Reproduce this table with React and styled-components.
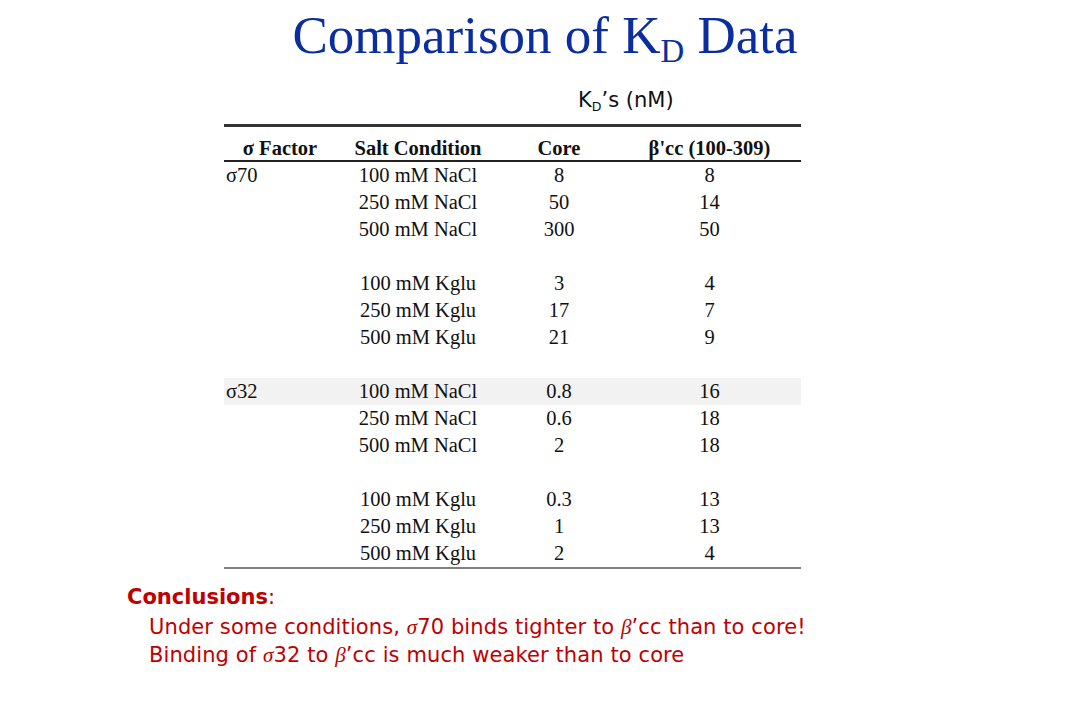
import React from 'react';
import styled, { createGlobalStyle } from 'styled-components';

const Global = createGlobalStyle`
  body {
    margin: 0;
    background: #ffffff;
  }
`;

const Slide = styled.div`
  width: 1080px;
  height: 720px;
  background: #ffffff;
  overflow: hidden;
`;

const Title = styled.h1`
  margin: 0;
  padding: 5px 0 0 10px;
  height: 72px;
  box-sizing: border-box;
  text-align: center;
  font-family: "Liberation Serif", serif;
  font-weight: normal;
  font-size: 53px;
  line-height: 60px;
  color: #0a2ea0;
`;

const Sub = styled.sub`
  font-size: 0.62em;
  vertical-align: -0.28em;
`;

const Units = styled.div`
  padding-left: 578px;
  height: 52px;
  padding-top: 16px;
  box-sizing: border-box;
  font-family: "DejaVu Sans", sans-serif;
  font-size: 21px;
  color: #111;
`;

const SmallSub = styled.sub`
  font-size: 0.6em;
  vertical-align: -0.3em;
`;

const TableWrap = styled.div`
  padding-left: 224px;
`;

const Table = styled.table`
  width: 577px;
  border-collapse: collapse;
  font-family: "Liberation Serif", serif;
  font-size: 20.5px;
  color: #111;
`;

const HeadCell = styled.th`
  height: 24px;
  padding: 9px 0 0;
  font-weight: bold;
  text-align: center;
  border-top: 3px solid #333;
  border-bottom: 2px solid #222;
  width: ${p => p.$w}px;
  vertical-align: middle;
`;

const Row = styled.tr`
  background: ${p => (p.$shade ? '#f2f2f2' : 'transparent')};
  height: 27px;
  &:last-child td {
    border-bottom: 2px solid #808080;
  }
`;

const Cell = styled.td`
  padding: 0 0 0 ${p => (p.$left ? '2px' : '0')};
  text-align: ${p => (p.$left ? 'left' : 'center')};
  height: 27px;
  line-height: 27px;
`;

const Conclusions = styled.div`
  padding: 14px 0 0 127px;
  font-family: "DejaVu Sans", sans-serif;
  font-size: 21px;
  color: #c00000;
  line-height: 28px;
`;

const Heading = styled.div`
  font-weight: bold;
  margin-bottom: 2px;
  span {
    font-weight: normal;
  }
`;

const Point = styled.div`
  padding-left: 22px;
  letter-spacing: 0.1px;
`;

const Greek = styled.span`
  font-family: "Liberation Serif", serif;
  font-style: italic;
`;

const rows = [
  ['\u03c370', '100 mM NaCl', '8', '8'],
  ['', '250 mM NaCl', '50', '14'],
  ['', '500 mM NaCl', '300', '50'],
  ['', '', '', ''],
  ['', '100 mM Kglu', '3', '4'],
  ['', '250 mM Kglu', '17', '7'],
  ['', '500 mM Kglu', '21', '9'],
  ['', '', '', ''],
  ['\u03c332', '100 mM NaCl', '0.8', '16', true],
  ['', '250 mM NaCl', '0.6', '18'],
  ['', '500 mM NaCl', '2', '18'],
  ['', '', '', ''],
  ['', '100 mM Kglu', '0.3', '13'],
  ['', '250 mM Kglu', '1', '13'],
  ['', '500 mM Kglu', '2', '4'],
];

export default function App() {
  return (
    <Slide>
      <Global />
      <Title>
        Comparison of K<Sub>D</Sub> Data
      </Title>
      <Units>
        K<SmallSub>D</SmallSub>’s (nM)
      </Units>
      <TableWrap>
        <Table>
          <thead>
            <tr>
              <HeadCell $w={112}>σ Factor</HeadCell>
              <HeadCell $w={164}>Salt Condition</HeadCell>
              <HeadCell $w={118}>Core</HeadCell>
              <HeadCell $w={183}>β'cc (100-309)</HeadCell>
            </tr>
          </thead>
          <tbody>
            {rows.map((r, i) => (
              <Row key={i} $shade={r[4]}>
                <Cell $left>{r[0]}</Cell>
                <Cell>{r[1]}</Cell>
                <Cell>{r[2]}</Cell>
                <Cell>{r[3]}</Cell>
              </Row>
            ))}
          </tbody>
        </Table>
      </TableWrap>
      <Conclusions>
        <Heading>
          Conclusions<span>:</span>
        </Heading>
        <Point>
          Under some conditions, <Greek>σ</Greek>70 binds tighter to <Greek>β</Greek>’cc than to core!
        </Point>
        <Point>
          Binding of <Greek>σ</Greek>32 to <Greek>β</Greek>’cc is much weaker than to core
        </Point>
      </Conclusions>
    </Slide>
  );
}
